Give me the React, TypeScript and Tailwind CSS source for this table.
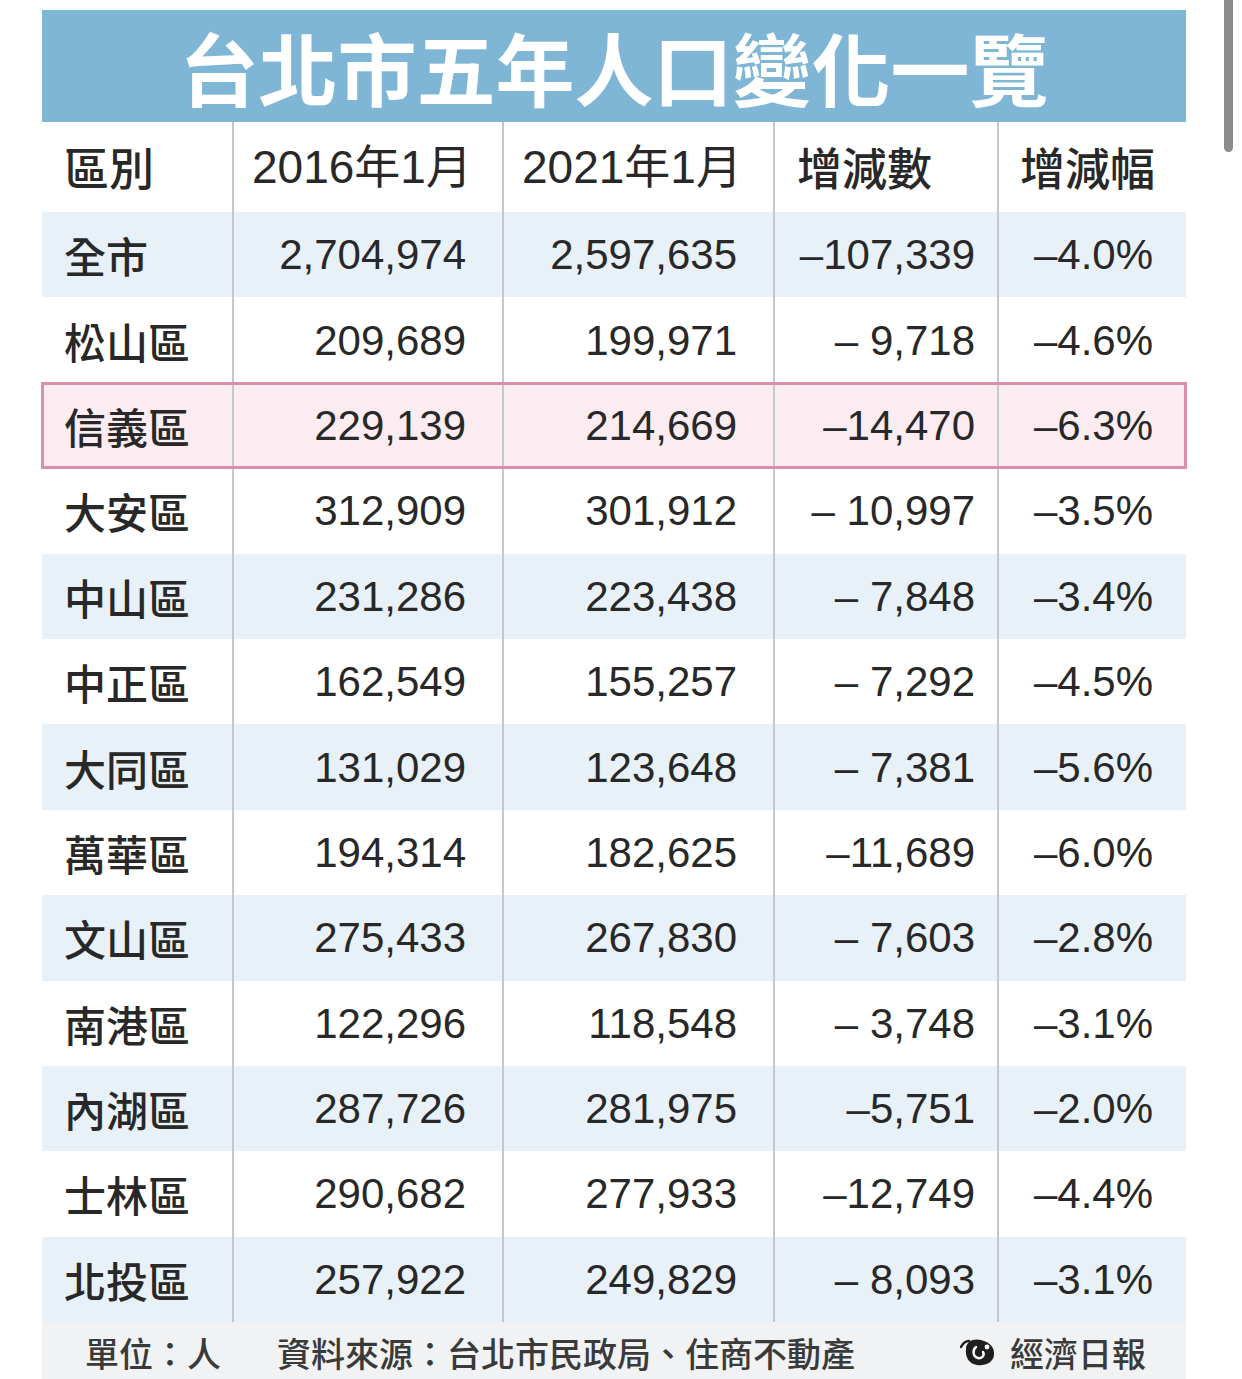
import React from 'react';

const ROWS = [
  { name: '全市', y16: '2,704,974', y21: '2,597,635', diff: '–107,339', pct: '–4.0%' },
  { name: '松山區', y16: '209,689', y21: '199,971', diff: '– 9,718', pct: '–4.6%' },
  { name: '信義區', y16: '229,139', y21: '214,669', diff: '–14,470', pct: '–6.3%', hl: true },
  { name: '大安區', y16: '312,909', y21: '301,912', diff: '– 10,997', pct: '–3.5%' },
  { name: '中山區', y16: '231,286', y21: '223,438', diff: '– 7,848', pct: '–3.4%' },
  { name: '中正區', y16: '162,549', y21: '155,257', diff: '– 7,292', pct: '–4.5%' },
  { name: '大同區', y16: '131,029', y21: '123,648', diff: '– 7,381', pct: '–5.6%' },
  { name: '萬華區', y16: '194,314', y21: '182,625', diff: '–11,689', pct: '–6.0%' },
  { name: '文山區', y16: '275,433', y21: '267,830', diff: '– 7,603', pct: '–2.8%' },
  { name: '南港區', y16: '122,296', y21: '118,548', diff: '– 3,748', pct: '–3.1%' },
  { name: '內湖區', y16: '287,726', y21: '281,975', diff: '–5,751', pct: '–2.0%' },
  { name: '士林區', y16: '290,682', y21: '277,933', diff: '–12,749', pct: '–4.4%' },
  { name: '北投區', y16: '257,922', y21: '249,829', diff: '– 8,093', pct: '–3.1%' },
];

const FONT = "font-['Liberation_Sans','Noto_Sans_CJK_TC',sans-serif]";
const CJK = "font-['Noto_Sans_CJK_TC','Liberation_Sans',sans-serif]";
const GRID = 'grid grid-cols-[190px_270px_271px_224px_189px]';
const CELL = 'h-full flex items-center border-l-2 border-[#c4c7cb]';

// 經濟日報 mark
const Logo = () => (
  <svg width="40" height="32" viewBox="0 0 40 32">
    <path d="M6 13 C6 5 14 2 21 4 C29 6 35 11 34 19 C33 27 25 30 17 29 C9 28 5 21 6 13 Z" fill="#1e1e1e" />
    <path d="M16 11 C12 14 13 21 18 22 C22 23 25 19 23 16" stroke="#fff" strokeWidth="2.4" fill="none" strokeLinecap="round" />
    <circle cx="27" cy="11" r="2.4" fill="#fff" />
    <path d="M1 11 C3 7 6 5 9 5" stroke="#1e1e1e" strokeWidth="2.4" fill="none" strokeLinecap="round" />
  </svg>
);

export default function App() {
  return (
    <div className={`relative w-[1242px] h-[1379px] overflow-hidden bg-white pt-[10px] pl-[42px] ${FONT} text-[#282828]`}>
      <div className="w-[1144px]">
        {/* title */}
        <div className="h-[112px] bg-[#7fb6d6] flex items-center justify-center">
          <h1 className={`${CJK} text-[79px] font-bold text-white leading-none`}>
            台北市五年人口變化一覽
          </h1>
        </div>

        {/* header */}
        <div className={`${GRID} h-[90px] bg-white text-[46px]`}>
          <div className={`h-full flex items-center pl-[22px] ${CJK} text-[45px] font-medium`}>區別</div>
          <div className={`${CELL} pl-[18px]`}>2016年1月</div>
          <div className={`${CELL} pl-[18px]`}>2021年1月</div>
          <div className={`${CELL} pl-[22px] ${CJK} text-[45px] font-medium`}>增減數</div>
          <div className={`${CELL} pl-[21px] ${CJK} text-[45px] font-medium`}>增減幅</div>
        </div>

        {/* rows */}
        {ROWS.map((r, i) => {
          const bg = r.hl
            ? 'bg-[#fbecf2] outline-[3px] outline-[#d98fad] -outline-offset-2 relative z-10'
            : i % 2 === 0
              ? 'bg-[#e8f0f8]'
              : 'bg-white';
          return (
            <div key={r.name} className={`${GRID} h-[85.4px] ${bg} text-[42px]`}>
              <div className={`h-full flex items-center pl-[22px] ${CJK} font-medium`}>{r.name}</div>
              <div className={`${CELL} justify-end pr-[36px]`}>{r.y16}</div>
              <div className={`${CELL} justify-end pr-[36px]`}>{r.y21}</div>
              <div className={`${CELL} justify-end pr-[22px] whitespace-pre`}>{r.diff}</div>
              <div className={`${CELL} justify-center pl-[2px]`}>{r.pct}</div>
            </div>
          );
        })}

        {/* footer */}
        <div className={`h-[60px] bg-[#f1f2f3] flex items-center ${CJK} text-[34px] font-medium text-[#3a3a3a]`}>
          <span className="pl-[43px] w-[235px]">單位：人</span>
          <span>資料來源：台北市民政局、住商不動產</span>
          <span className="ml-auto mr-[40px] flex items-center gap-[10px]">
            <Logo />
            經濟日報
          </span>
        </div>
      </div>

      {/* scrollbar overlay */}
      <div className="absolute top-0 right-[9px] w-[9px] h-[152px] rounded-b-full bg-[#8c8c8c]" />
    </div>
  );
}
